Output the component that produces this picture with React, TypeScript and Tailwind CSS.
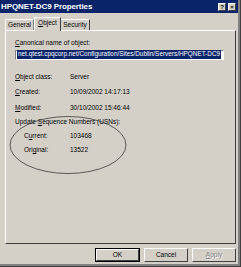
import React from "react";

const U = ({ c }: { c: string }) => <span className="underline underline-offset-[1px] decoration-[0.5px]">{c}</span>;

export default function App() {
  return (
    <div
      className="relative w-[241px] h-[267px] bg-[#d4d0c8] overflow-hidden text-black"
      style={{ fontFamily: '"Liberation Sans", Arial, sans-serif' }}
    >
      <div className="absolute inset-0 border-r border-b border-[#404040] pointer-events-none" />
      <div className="absolute inset-0 border-r-2 border-b-2 border-[#808080] pointer-events-none mr-px mb-px" />
      {/* title bar */}
      <div className="h-[13px] mr-[3px] bg-[#0a246a] flex items-center justify-between pl-[1px] pr-[2px]">
        <span className="text-white font-bold text-[8px] leading-none tracking-[-0.1px]">HPQNET-DC9 Properties</span>
        <div className="flex gap-[2px]">
          <div className="w-[8px] h-[8px] bg-[#d4d0c8] border-t border-l border-white border-r border-b border-r-[#404040] border-b-[#404040] flex items-center justify-center text-[6px] font-bold leading-none">?</div>
          <div className="w-[8px] h-[8px] bg-[#d4d0c8] border-t border-l border-white border-r border-b border-r-[#404040] border-b-[#404040] flex items-center justify-center text-[6px] font-bold leading-none">×</div>
        </div>
      </div>
      {/* tabs */}
      <div className="flex items-end ml-[5px] mt-[4px] h-[13px] text-[6.5px] leading-none relative z-10">
        <div className="h-[11px] w-[29px] border-l border-t border-white rounded-tl-[1px] flex items-center justify-center border-r border-r-[#808080]">General</div>
        <div className="h-[14px] w-[27px] -mb-px bg-[#d4d0c8] border-l border-t border-white border-r border-r-[#404040] flex items-center justify-center pb-[2px]">
          <span><U c="O" />bject</span>
        </div>
        <div className="h-[11px] w-[29px] border-t border-white flex items-center justify-center border-r border-r-[#404040]">Security</div>
      </div>
      {/* panel */}
      <div className="ml-[5px] w-[231px] h-[214px] border-l border-t border-white border-r border-b border-r-[#404040] border-b-[#404040] text-[6.5px] leading-none relative">
        <div className="pl-[9px] pt-[9px]">
          <div><U c="C" />anonical name of object:</div>
          <div className="mt-[3px] w-[209px] h-[10px] bg-white border-l border-t border-[#808080] border-r border-b border-r-white border-b-white flex items-center pl-[1px]">
            <span className="bg-[#0a246a] text-white px-[1px] py-[1px] whitespace-nowrap text-[6.4px]">net.qtest.cpqcorp.net/Configuration/Sites/Dublin/Servers/HPQNET-DC9</span>
          </div>
          <div className="mt-[14px] flex flex-col gap-[9px]">
            <div className="flex"><span className="w-[55px]"><U c="O" />bject class:</span><span>Server</span></div>
            <div className="flex"><span className="w-[55px]"><U c="C" />reated:</span><span>10/09/2002 14:17:13</span></div>
            <div className="flex"><span className="w-[55px]"><U c="M" />odified:</span><span>30/10/2002 15:46:44</span></div>
            <div className="-mt-[1px]">Update <U c="S" />equence Numbers (USNs):</div>
            <div className="flex -mt-[2px]"><span className="w-[46px] ml-[9px]">C<U c="u" />rrent:</span><span>103468</span></div>
            <div className="flex -mt-[1px]"><span className="w-[46px] ml-[9px]">Ori<U c="g" />inal:</span><span>13522</span></div>
          </div>
        </div>
        <svg className="absolute left-0 top-0 pointer-events-none" width="231" height="214">
          <ellipse cx="62" cy="114" rx="58" ry="28.5" fill="none" stroke="#3a3a3a" strokeWidth="0.8" />
        </svg>
      </div>
      {/* buttons */}
      <div className="flex justify-end gap-[4px] mr-[5px] mt-[4px] text-[6.5px] leading-none">
        <div className="w-[45px] h-[14px] border border-black">
          <div className="w-full h-full border-t border-l border-white border-r border-b border-r-[#404040] border-b-[#404040] flex items-center justify-center">OK</div>
        </div>
        <div className="w-[44px] h-[14px] border-t border-l border-white border-r border-b border-r-[#404040] border-b-[#404040] flex items-center justify-center">Cancel</div>
        <div className="w-[44px] h-[14px] border-t border-l border-white border-r border-b border-r-[#404040] border-b-[#404040] flex items-center justify-center text-[#808080]" style={{ textShadow: "0.6px 0.6px 0 #fff" }}>
          <span><U c="A" />pply</span>
        </div>
      </div>
    </div>
  );
}
